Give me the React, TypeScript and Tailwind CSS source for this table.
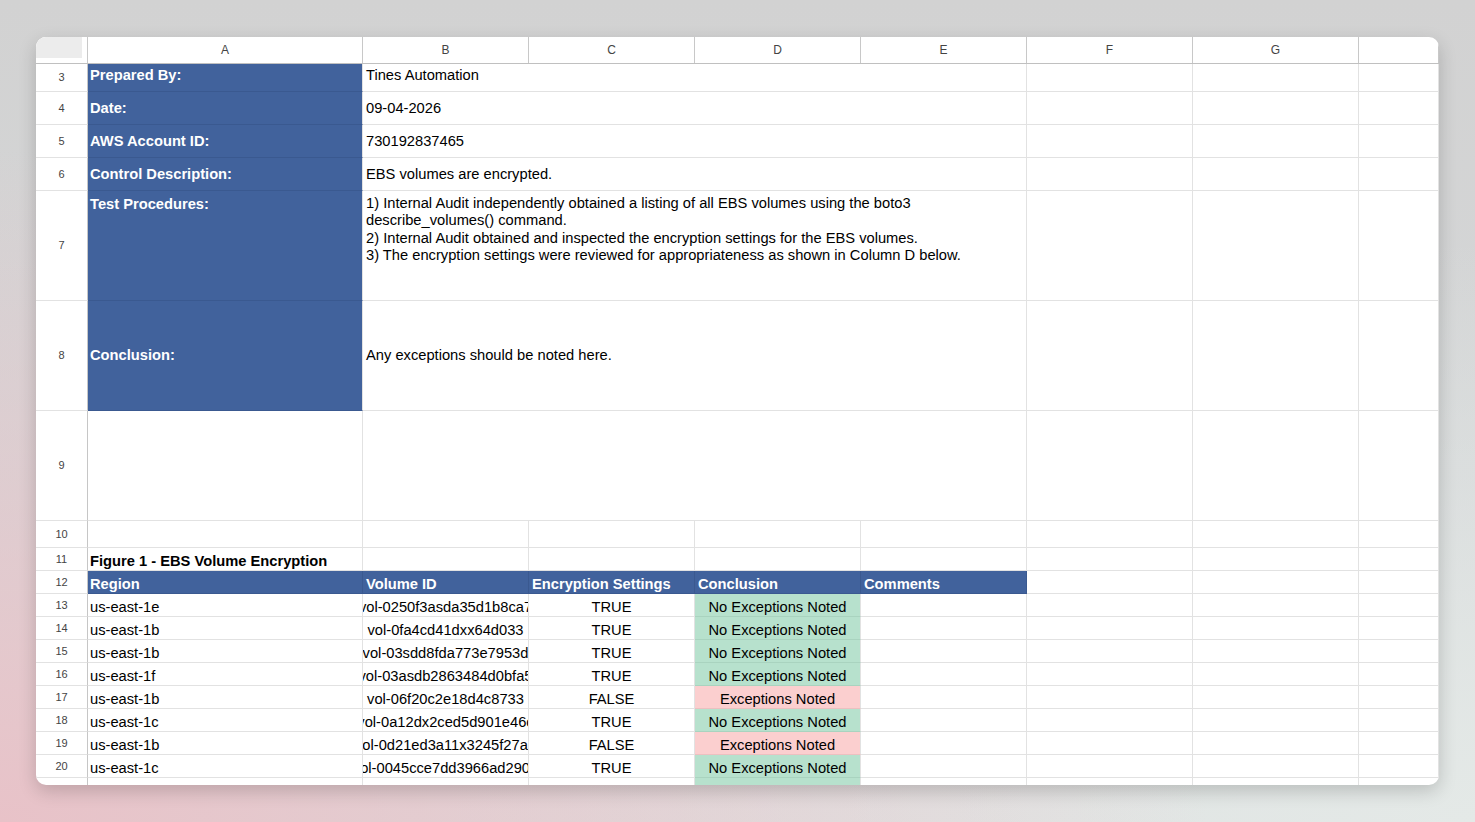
import React from 'react'

const COLS = 'grid grid-cols-[52px_275px_166px_166px_166px_166px_166px_166px_1fr]'
const CELL = 'border-r border-b border-[#e2e2e2] overflow-hidden whitespace-nowrap flex items-center px-[2px]'
const BLUE = 'bg-[#41629c] text-white font-bold border-b-[#3a5990]'

type VolumeRow = {
  n: number
  region: string
  volume: string
  encrypted: boolean
}

const VOLUMES: VolumeRow[] = [
  { n: 13, region: 'us-east-1e', volume: 'vol-0250f3asda35d1b8ca7', encrypted: true },
  { n: 14, region: 'us-east-1b', volume: 'vol-0fa4cd41dxx64d033', encrypted: true },
  { n: 15, region: 'us-east-1b', volume: 'vol-03sdd8fda773e7953d', encrypted: true },
  { n: 16, region: 'us-east-1f', volume: 'vol-03asdb2863484d0bfa5', encrypted: true },
  { n: 17, region: 'us-east-1b', volume: 'vol-06f20c2e18d4c8733', encrypted: false },
  { n: 18, region: 'us-east-1c', volume: 'vol-0a12dx2ced5d901e46c', encrypted: true },
  { n: 19, region: 'us-east-1b', volume: 'vol-0d21ed3a11x3245f27ab', encrypted: false },
  { n: 20, region: 'us-east-1c', volume: 'vol-0045cce7dd3966ad2903', encrypted: true },
]

function RowNum({ n }: { n?: number }) {
  return (
    <div className="flex items-center justify-center border-r border-b border-r-[#c6c6c6] border-b-[#e2e2e2] text-[11px] text-[#444]">
      {n}
    </div>
  )
}

function Blank() {
  return <div className={CELL} />
}

// rows 3-9: A label, B:E merged text
function InfoRow({
  n,
  height,
  label,
  children,
  top = false,
}: {
  n: number
  height: string
  label?: string
  children?: React.ReactNode
  top?: boolean
}) {
  return (
    <div className={`${COLS} ${height}`}>
      <RowNum n={n} />
      <div className={`${CELL} ${label !== undefined ? BLUE : ''} ${top ? 'items-start pt-[2px]' : ''}`}>
        {label}
      </div>
      <div className={`${CELL} col-span-4 px-[3px] ${top ? 'items-start pt-[4px]' : ''}`}>{children}</div>
      <Blank />
      <Blank />
      <Blank />
    </div>
  )
}

export default function App() {
  return (
    <div
      className="w-full h-[822px] overflow-hidden pl-[36px] pt-[37px] bg-[image:radial-gradient(ellipse_at_0%_100%,#e8c2c8_0%,rgba(232,194,200,0)_58%),radial-gradient(ellipse_at_100%_100%,#e4e9e7_0%,rgba(228,233,231,0)_50%),linear-gradient(180deg,#d2d2d2_0%,#d5d7d8_60%,#dcdfdf_100%)]"
      style={{ fontFamily: '"Liberation Sans", Arial, sans-serif' }}
    >
      <div className="w-[1403px] h-[748px] bg-white rounded-[10px] overflow-hidden shadow-[0_6px_18px_rgba(0,0,0,0.18)] text-[14.7px] text-black">
        {/* Column header */}
        <div className={`${COLS} h-[27px] border-b border-[#c0c0c0]`}>
          <div className="border-r border-[#c8c8c8] bg-white pr-[5px] pb-[5px]">
            <div className="w-full h-full bg-[#ececec]" />
          </div>
          {['A', 'B', 'C', 'D', 'E', 'F', 'G', ''].map((c, i) => (
            <div
              key={i}
              className="flex items-center justify-center border-r border-[#c8c8c8] text-[12px] text-[#444]"
            >
              {c}
            </div>
          ))}
        </div>

        <div className={`${COLS} h-[28px]`}>
          <RowNum n={3} />
          <div className={`${CELL} ${BLUE} pb-[4px]`}>Prepared By:</div>
          <div className={`${CELL} col-span-4 px-[3px] pb-[4px]`}>Tines Automation</div>
          <Blank />
          <Blank />
          <Blank />
        </div>
        <InfoRow n={4} height="h-[33px]" label="Date:">09-04-2026</InfoRow>
        <InfoRow n={5} height="h-[33px]" label="AWS Account ID:">730192837465</InfoRow>
        <InfoRow n={6} height="h-[33px]" label="Control Description:">EBS volumes are encrypted.</InfoRow>
        <InfoRow n={7} height="h-[110px]" label="Test Procedures:" top>
          <div className="whitespace-normal leading-[17.3px]">
            1) Internal Audit independently obtained a listing of all EBS volumes using the boto3
            <br />
            describe_volumes() command.
            <br />
            2) Internal Audit obtained and inspected the encryption settings for the EBS volumes.
            <br />
            3) The encryption settings were reviewed for appropriateness as shown in Column D below.
          </div>
        </InfoRow>
        <InfoRow n={8} height="h-[110px]" label="Conclusion:">
          Any exceptions should be noted here.
        </InfoRow>
        <InfoRow n={9} height="h-[110px]" />

        {/* Row 10 */}
        <div className={`${COLS} h-[27px]`}>
          <RowNum n={10} />
          {Array.from({ length: 8 }).map((_, i) => (
            <Blank key={i} />
          ))}
        </div>

        {/* Row 11 */}
        <div className={`${COLS} h-[23px]`}>
          <RowNum n={11} />
          <div className={`${CELL} font-bold pt-[5px]`}>Figure 1 - EBS Volume Encryption</div>
          {Array.from({ length: 7 }).map((_, i) => (
            <Blank key={i} />
          ))}
        </div>

        {/* Row 12 table header */}
        <div className={`${COLS} h-[23px]`}>
          <RowNum n={12} />
          {['Region', 'Volume ID', 'Encryption Settings', 'Conclusion', 'Comments'].map((h, i) => (
            <div
              key={h}
              className={`${CELL} ${BLUE} pt-[4px] border-r-[#3a5990] ${i === 0 ? 'px-[2px]' : 'px-[3px]'}`}
            >
              {h}
            </div>
          ))}
          <Blank />
          <Blank />
          <Blank />
        </div>

        {VOLUMES.map((v) => (
          <div key={v.n} className={`${COLS} h-[23px]`}>
            <RowNum n={v.n} />
            <div className={`${CELL} pt-[4px]`}>{v.region}</div>
            <div className={`${CELL} justify-center px-0 pt-[4px]`}>{v.volume}</div>
            <div className={`${CELL} justify-center pt-[4px]`}>{v.encrypted ? 'TRUE' : 'FALSE'}</div>
            <div
              className={`${CELL} justify-center pt-[4px] ${
                v.encrypted ? 'bg-[#b7e1cd] border-b-[#a9d3bf]' : 'bg-[#fbcfcf] border-b-[#ecc0c0]'
              }`}
            >
              {v.encrypted ? 'No Exceptions Noted' : 'Exceptions Noted'}
            </div>
            <Blank />
            <Blank />
            <Blank />
            <Blank />
          </div>
        ))}

        {/* Row 21, cut off */}
        <div className={`${COLS} h-[23px]`}>
          <RowNum n={21} />
          <Blank />
          <Blank />
          <Blank />
          <div className={`${CELL} bg-[#b7e1cd]`} />
          <Blank />
          <Blank />
          <Blank />
          <Blank />
        </div>
      </div>
    </div>
  )
}
